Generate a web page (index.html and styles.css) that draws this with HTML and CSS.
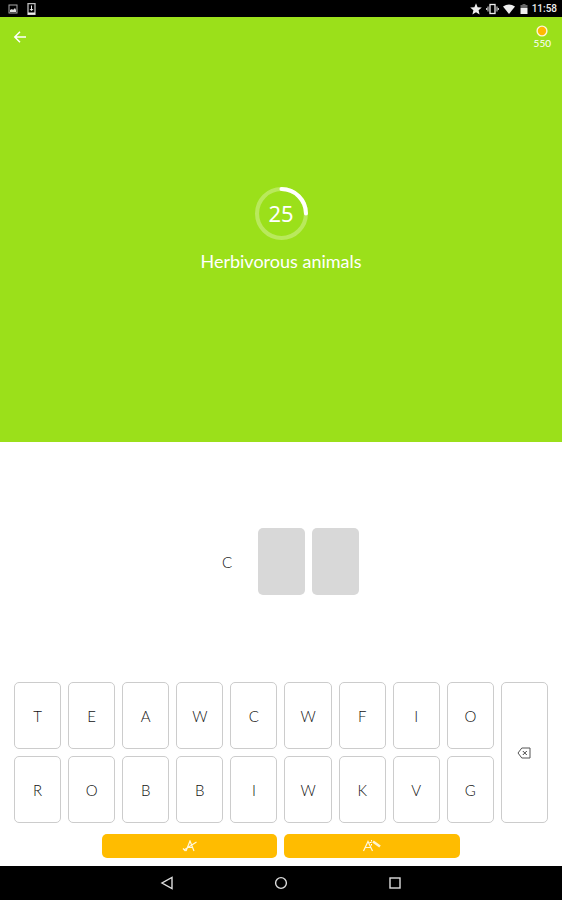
FILE: index.html
```html
<!DOCTYPE html>
<html lang="en">
<head>
<meta charset="utf-8">
<meta name="viewport" content="width=device-width, initial-scale=1">
<title>Herbivorous animals</title>
<link rel="stylesheet" href="styles.css">
</head>
<body>
<div class="status">
  <div class="status-group notices">
    <svg width="10" height="10" viewBox="0 0 10 10"><rect x="1" y="1" width="8" height="8" fill="none" stroke="#aaa"/><path d="M2 8V6l2-1 1 1 2-2 1 2v2z" fill="#ddd"/></svg>
    <svg width="9" height="12" viewBox="0 0 9 12"><path d="M1 .7h7v10.6H1z" fill="none" stroke="#bbb" stroke-width="1.3"/><path d="M1 9.5h7v2H1zM4 2.500h1V6h1.500l-2 2-2-2H4z" fill="#eee"/></svg>
  </div>
  <div class="status-group">
    <svg width="12" height="12" viewBox="0 0 12 12"><path d="M6 .3l1.600 3.900 4.200.3-3.200 2.700 1 4.200L6 9.200l-3.600 2.200 1-4.200L.2 4.500l4.200-.3z" fill="#eee"/></svg>
    <svg width="13" height="12" viewBox="0 0 13 12"><rect x="4" y="1.500" width="5" height="9" fill="none" stroke="#eee" stroke-width="1.300"/><path d="M2 3.500v5M11 3.500v5M.6 5v2M12.400 5v2" stroke="#ccc" stroke-width="1.100"/></svg>
    <svg width="12" height="12" viewBox="0 0 12 12"><path d="M0 3.500Q6-.5 12 3.500L6 11z" fill="#eee"/></svg>
    <svg class="battery" width="8" height="12" viewBox="0 0 8 12"><path d="M2.500 1h3v1H7.500v3h-7V2h2z" fill="#666"/><path d="M.5 5h7v6h-7z" fill="#eee"/></svg>
    <span class="clock">11:58</span>
  </div>
</div>
<main class="game">
  <section class="hero">
    <button class="back" aria-label="Back"><svg width="14" height="14" viewBox="0 0 14 14"><path d="M13 7H2M7 1.800L1.800 7 7 12.200" fill="none" stroke="#fff" stroke-width="1.500"/></svg></button>
    <div class="coins">
      <svg width="12" height="12" viewBox="0 0 12 12"><circle cx="6" cy="6" r="4.900" fill="#ffb900" stroke="#fff6d8" stroke-width="1.400"/></svg>
      <span>550</span>
    </div>
    <div class="timer">
      <svg class="ring" viewBox="0 0 52 52"><circle cx="26" cy="26" r="24" fill="none" stroke="#b9e95c" stroke-width="4"/><path d="M26 2a24 24 0 0 1 24 24" fill="none" stroke="#fff" stroke-width="4" stroke-linecap="round"/></svg>
      <span class="count">25</span>
    </div>
    <h1 class="topic">Herbivorous animals</h1>
  </section>
  <section class="board">
    <div class="answer">
      <span class="slot given">C</span><span class="slot"></span><span class="slot"></span>
    </div>
    <div class="keys">
      <button>T</button><button>E</button><button>A</button><button>W</button><button>C</button><button>W</button><button>F</button><button>I</button><button>O</button>
      <button class="erase" aria-label="Delete letter"><svg width="14" height="12" viewBox="0 0 14 12"><path d="M4.800 1h8.200v10H4.800L1 6z" fill="none" stroke="#555" stroke-linejoin="round"/><path d="M5.800 4l4 4M9.800 4l-4 4" stroke="#444"/></svg></button>
      <button>R</button><button>O</button><button>B</button><button>B</button><button>I</button><button>W</button><button>K</button><button>V</button><button>G</button>
    </div>
    <div class="hints">
      <button aria-label="Remove letters"><svg width="16" height="12" viewBox="0 0 16 12"><path d="M4 11L8 1l4 10M5.500 7.500h5M2 10L14.500 2M1 8.500l2.500 2.500" fill="none" stroke="#fff8e0" stroke-width="1.200"/></svg></button>
      <button aria-label="Reveal letter"><svg width="20" height="12" viewBox="0 0 20 12"><path d="M1.500 11L6 1.500 10.500 11M3.300 7.500h5.500" fill="none" stroke="#fff8e0" stroke-width="1.200"/><path d="M11 1.500l7 5" stroke="#fff4cf" stroke-width="2.600"/><path d="M7.500 2.500h2M9.500 4v1.500M9.500 0v1.500" stroke="#fff"/></svg></button>
    </div>
  </section>
</main>
<nav class="system">
  <button aria-label="System back"><svg width="14" height="14" viewBox="0 0 14 14"><path d="M12 1.500v11L2 7z" fill="none" stroke="#ddd" stroke-width="1.400"/></svg></button>
  <button aria-label="Home"><svg width="14" height="14" viewBox="0 0 14 14"><circle cx="7" cy="7" r="5.400" fill="none" stroke="#ddd" stroke-width="1.400"/></svg></button>
  <button aria-label="Recent apps"><svg width="14" height="14" viewBox="0 0 14 14"><rect x="2" y="2" width="10" height="10" fill="none" stroke="#ddd" stroke-width="1.400"/></svg></button>
</nav>
</body>
</html>
```
FILE: styles.css
```css
* { box-sizing: border-box; }
body {
  margin: 0;
  min-height: 100vh;
  display: flex;
  flex-direction: column;
  background: #fff;
  color: #111;
  font-family: Lato, "Liberation Sans", sans-serif;
  font-weight: 300;
}
button {
  display: flex;
  align-items: center;
  justify-content: center;
  margin: 0;
  padding: 0;
  border: 0;
  background: none;
  color: inherit;
  font: inherit;
}
svg { display: block; }
.status {
  height: 17px;
  padding: 0 5px 0 8px;
  display: flex;
  justify-content: space-between;
  background: #000;
  color: #eee;
}
.status-group { display: flex; align-items: center; gap: 4px; }
.notices { gap: 9px; }
.battery { margin-left: 1px; }
.clock { font: 500 10px/17px Roboto, sans-serif; }
.game { flex: 1; display: grid; grid-template-rows: 1fr 1fr; }
.hero {
  position: relative;
  display: flex;
  flex-direction: column;
  align-items: center;
  justify-content: center;
  gap: 10px;
  background: #9be01a;
  color: #fff;
}
.back { position: absolute; left: 13px; top: 13px; }
.coins {
  position: absolute;
  right: 11px;
  top: 8px;
  display: flex;
  flex-direction: column;
  align-items: center;
  font: 400 10px/12px Lato, sans-serif;
}
.timer { display: grid; place-items: center; }
.timer > * { grid-area: 1 / 1; }
.ring { width: 53px; height: 53px; }
.count { font: 400 22px/24px "Noto Sans", sans-serif; }
.topic { margin: 0; font-size: 18px; line-height: 22px; font-weight: 400; }
.board { display: flex; flex-direction: column; padding: 0 14px 8px; }
.answer { flex: 1; display: flex; align-items: center; justify-content: center; gap: 7px; }
.slot {
  display: grid;
  place-items: center;
  width: 47px;
  height: 67px;
  border-radius: 5px;
  background: #d8d8d8;
  font-size: 15px;
}
.given { background: none; }
.keys {
  display: grid;
  grid-template-columns: repeat(10, 1fr);
  grid-auto-rows: 67px;
  gap: 7px;
  font-size: 15px;
}
.keys button { border: 1px solid #ccc; border-radius: 5px; }
.keys .erase { grid-column: 10; grid-row: 1 / span 2; }
.hints {
  display: grid;
  grid-template-columns: 1fr 1fr;
  gap: 7px;
  width: 67%;
  margin: 11px auto 0;
}
.hints button { height: 24px; border-radius: 5px; background: #ffbc00; }
.system {
  height: 34px;
  display: flex;
  align-items: center;
  justify-content: center;
  gap: 100px;
  background: #000;
}
```
